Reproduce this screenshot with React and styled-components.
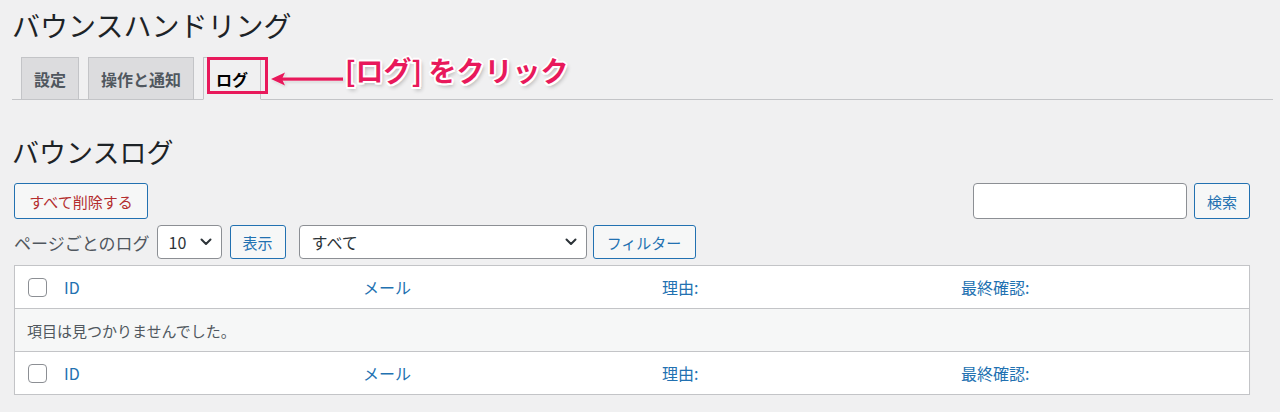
import React from "react";
import styled, { createGlobalStyle } from "styled-components";

const FONT = `"Noto Sans CJK JP", "Noto Sans", sans-serif`;
const PINK = "#e8195b";

const GlobalStyle = createGlobalStyle`
  html, body { margin: 0; padding: 0; background: #f0f0f1; }
  body { font-family: ${FONT}; color: #3c434a; }
  * { box-sizing: border-box; }
`;

const Wrap = styled.div`
  padding: 0 7px 0 12px;
`;

const PageTitle = styled.h1`
  margin: 0;
  padding-top: 11px;
  font-size: 28px;
  line-height: 28px;
  font-weight: 400;
  color: #1d2327;
  white-space: nowrap;
`;

const TabBar = styled.nav`
  position: relative;
  margin-top: 18px;
  display: flex;
  align-items: flex-end;
  padding-left: 9px;
  border-bottom: 1px solid #c3c4c7;
`;

const Tab = styled.a`
  display: flex;
  align-items: center;
  height: 43px;
  margin-bottom: -1px;
  margin-left: ${(p) => (p.$first ? "0" : "9px")};
  padding: 0 12px;
  border: 1px solid #c3c4c7;
  border-bottom-color: ${(p) => (p.$active ? "#f0f0f1" : "#c3c4c7")};
  background: ${(p) => (p.$active ? "#f0f0f1" : "#dcdcde")};
  color: ${(p) => (p.$active ? "#000" : "#50575e")};
  font-size: 16px;
  font-weight: 700;
  white-space: nowrap;
`;

const HighlightBox = styled.div`
  position: absolute;
  left: 195px;
  top: 0;
  width: 61px;
  height: 37px;
  border: 3px solid ${PINK};
  pointer-events: none;
`;

const Callout = styled.div`
  position: absolute;
  left: 258px;
  top: 0;
  display: flex;
  align-items: flex-start;
  pointer-events: none;
`;

const ArrowSvg = styled.svg`
  margin-top: 14px;
  flex-shrink: 0;
  filter: drop-shadow(0 0 1px #fff) drop-shadow(1px 1px 1px rgba(0, 0, 0, 0.15));
`;

const CalloutText = styled.span`
  margin-left: 1px;
  margin-top: -2px;
  font-size: 28px;
  line-height: 30px;
  font-weight: 700;
  color: ${PINK};
  white-space: nowrap;
  text-shadow: 2px 0 #fff, -2px 0 #fff, 0 2px #fff, 0 -2px #fff,
    1.5px 1.5px #fff, -1.5px 1.5px #fff, 1.5px -1.5px #fff, -1.5px -1.5px #fff,
    2px 3px 4px rgba(0, 0, 0, 0.3);
`;

const SectionTitle = styled.h2`
  margin: 38px 0 0;
  font-size: 27px;
  line-height: 28px;
  font-weight: 400;
  color: #1d2327;
`;

const Content = styled.div`
  margin-left: 2px;
  width: 1236px;
`;

const TopRow = styled.div`
  display: flex;
  justify-content: space-between;
  align-items: center;
  margin-top: 17px;
`;

const Group = styled.div`
  display: flex;
  align-items: center;
`;

const Button = styled.button`
  display: inline-flex;
  align-items: center;
  justify-content: center;
  flex-shrink: 0;
  width: ${(p) => p.$w}px;
  height: ${(p) => p.$h}px;
  margin-left: ${(p) => p.$ml || 0}px;
  padding: 0;
  border: 1px solid #2271b1;
  border-radius: 3px;
  background: #f6f7f7;
  color: ${(p) => (p.$danger ? "#b32d2e" : "#2271b1")};
  font-family: ${FONT};
  font-size: 15px;
  line-height: 1;
  white-space: nowrap;
`;

const SearchInput = styled.input`
  width: 214px;
  height: 36px;
  border: 1px solid #8c8f94;
  border-radius: 4px;
  background: #fff;
  font-family: ${FONT};
`;

const FilterRow = styled.div`
  display: flex;
  align-items: center;
  height: 34px;
  margin-top: 6px;
`;

const Label = styled.span`
  flex-shrink: 0;
  font-size: 17px;
  color: #50575e;
  white-space: nowrap;
`;

const SelectBox = styled.div`
  position: relative;
  display: flex;
  align-items: center;
  flex-shrink: 0;
  width: ${(p) => p.$w}px;
  height: 34px;
  margin-left: ${(p) => p.$ml || 0}px;
  padding-left: ${(p) => p.$pl || 11}px;
  border: 1px solid #8c8f94;
  border-radius: 4px;
  background: #fff;
  color: #2c3338;
  font-size: 16px;
  white-space: nowrap;
`;

const Chevron = styled.svg`
  position: absolute;
  right: 9px;
  top: 50%;
  transform: translateY(-50%);
`;

const Table = styled.div`
  margin-top: 6px;
  width: 1236px;
  border: 1px solid #c3c4c7;
  background: #fff;
  box-shadow: 0 1px 1px rgba(0, 0, 0, 0.04);
`;

const GridRow = styled.div`
  display: grid;
  grid-template-columns: 38px repeat(4, 1fr);
  align-items: center;
  height: 43px;
  border-bottom: ${(p) => (p.$foot ? "none" : "1px solid #c3c4c7")};
  border-top: ${(p) => (p.$foot ? "1px solid #c3c4c7" : "none")};
`;

const CheckCell = styled.div`
  padding-left: 13px;
  display: flex;
  align-items: center;
`;

const Checkbox = styled.span`
  display: block;
  width: 19px;
  height: 19px;
  border: 1px solid #8c8f94;
  border-radius: 4px;
  background: #fff;
`;

const HeadCell = styled.div`
  padding-left: 11px;
  font-size: 16px;
  color: #2271b1;
  white-space: nowrap;
`;

const EmptyRow = styled.div`
  display: flex;
  align-items: center;
  height: 42px;
  padding-left: 12px;
  background: #f6f7f7;
  font-size: 15px;
  color: #50575e;
`;

const ChevronIcon = () => (
  <Chevron width="12" height="8" viewBox="0 0 12 8">
    <path d="M1.5 1.5 L6 6 L10.5 1.5" fill="none" stroke="#2c3338" strokeWidth="2" strokeLinecap="round" strokeLinejoin="round" />
  </Chevron>
);

const columns = ["ID", "メール", "理由:", "最終確認:"];

const HeaderLine = ({ foot }) => (
  <GridRow $foot={foot}>
    <CheckCell>
      <Checkbox />
    </CheckCell>
    {columns.map((c) => (
      <HeadCell key={c}>{c}</HeadCell>
    ))}
  </GridRow>
);

export default function App() {
  return (
    <>
      <GlobalStyle />
      <Wrap>
        <PageTitle>バウンスハンドリング</PageTitle>
        <TabBar>
          <Tab $first>設定</Tab>
          <Tab>操作と通知</Tab>
          <Tab $active>ログ</Tab>
          <HighlightBox />
          <Callout>
            <ArrowSvg width="74" height="16" viewBox="0 0 74 16">
              <rect x="12" y="6.5" width="61" height="3.2" fill={PINK} />
              <polygon points="1,8 15,1.5 12,8 15,14.5" fill={PINK} />
            </ArrowSvg>
            <CalloutText>[ログ] をクリック</CalloutText>
          </Callout>
        </TabBar>
        <SectionTitle>バウンスログ</SectionTitle>
        <Content>
          <TopRow>
            <Button $w={134} $h={36} $danger>
              すべて削除する
            </Button>
            <Group>
              <SearchInput type="text" />
              <Button $w={56} $h={36} $ml={7}>
                検索
              </Button>
            </Group>
          </TopRow>
          <FilterRow>
            <Label>ページごとのログ</Label>
            <SelectBox $w={65} $ml={7}>
              10
              <ChevronIcon />
            </SelectBox>
            <Button $w={56} $h={34} $ml={8}>
              表示
            </Button>
            <SelectBox $w={288} $ml={13} $pl={12}>
              すべて
              <ChevronIcon />
            </SelectBox>
            <Button $w={103} $h={34} $ml={6}>
              フィルター
            </Button>
          </FilterRow>
          <Table>
            <HeaderLine />
            <EmptyRow>項目は見つかりませんでした。</EmptyRow>
            <HeaderLine foot />
          </Table>
        </Content>
      </Wrap>
    </>
  );
}
